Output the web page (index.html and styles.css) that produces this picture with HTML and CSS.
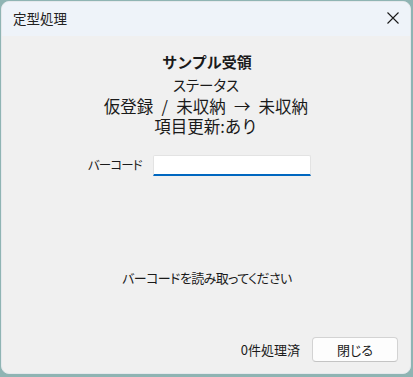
FILE: index.html
```html
<!DOCTYPE html>
<html lang="ja">
<head>
<meta charset="utf-8">
<link rel="stylesheet" href="styles.css">
</head>
<body>
<div class="window">
  <div class="titlebar">
    <span class="title">定型処理</span>
    <svg class="close" width="12" height="12" viewBox="0 0 12 12"><path d="M0.5 0.5 L11.5 11.5 M11.5 0.5 L0.5 11.5" stroke="#1a1a1a" stroke-width="1.1" fill="none"/></svg>
  </div>
  <div class="content">
    <div class="heading">サンプル受領</div>
    <div class="status">
      <div class="line small">ステータス</div>
      <div class="line wide">仮登録 / 未収納 → 未収納</div>
      <div class="line">項目更新:あり</div>
    </div>
    <div class="barcode-row">
      <span class="label">バーコード</span>
      <div class="input"></div>
    </div>
    <div class="message">バーコードを読み取ってください</div>
    <div class="footer">
      <span class="count">0件処理済</span>
      <button class="btn">閉じる</button>
    </div>
  </div>
</div>
</body>
</html>
```

FILE: styles.css
```css
html, body {
  margin: 0;
  padding: 0;
}
body {
  width: 413px;
  height: 377px;
  background: #8fb4b3;
  font-family: "Noto Sans CJK JP", "Noto Sans", sans-serif;
  font-feature-settings: "palt";
  color: #1a1a1a;
  overflow: hidden;
}
.window {
  margin: 1px 0 0 1px;
  width: 408px;
  height: 371px;
  border: 1px solid #e4e8ec;
  border-radius: 8px;
  background: #f0f0f0;
  overflow: hidden;
  display: flex;
  flex-direction: column;
}
.titlebar {
  height: 34px;
  flex: none;
  background: #eef3f9;
  display: flex;
  align-items: center;
  justify-content: space-between;
  padding: 0 11px 0 11px;
}
.title {
  font-size: 13.5px;
  line-height: 1;
  color: #222;
}
.close {
  display: block;
  margin-top: -2px;
}
.content {
  flex: 1;
  display: flex;
  flex-direction: column;
}
.heading {
  margin-top: 16px;
  text-align: center;
  font-weight: bold;
  font-size: 15px;
  line-height: 20px;
  font-feature-settings: normal;
  padding-left: 2px;
}
.status {
  margin-top: 3px;
  text-align: center;
}
.line {
  font-size: 16.5px;
  line-height: 20.5px;
  font-feature-settings: normal;
}
.line.small {
  font-size: 14.5px;
  font-feature-settings: "palt";
}
.line.wide {
  word-spacing: 4.5px;
}
.barcode-row {
  margin-top: 18px;
  display: flex;
  align-items: center;
  padding-left: 86px;
  gap: 11px;
}
.label {
  font-size: 12.5px;
  letter-spacing: -0.9px;
  line-height: 20px;
}
.input {
  width: 156px;
  height: 18px;
  background: #ffffff;
  border: 1px solid #e3e3e3;
  border-bottom: 2px solid #0067c0;
  border-radius: 2px 2px 0 0;
}
.message {
  margin-top: 92px;
  text-align: center;
  font-size: 13px;
  letter-spacing: -0.6px;
  line-height: 20px;
  padding-left: 2px;
}
.footer {
  margin-top: auto;
  margin-bottom: 11px;
  display: flex;
  justify-content: flex-end;
  align-items: center;
  gap: 12px;
  padding-right: 12px;
}
.count {
  font-size: 13px;
  line-height: 20px;
}
.btn {
  width: 86px;
  height: 25px;
  background: #fdfdfd;
  border: 1px solid #d3d3d3;
  border-bottom-color: #c4c4c4;
  border-radius: 4px;
  font-family: inherit;
  font-feature-settings: "palt";
  font-size: 13px;
  color: #1a1a1a;
  padding: 0;
}
```
